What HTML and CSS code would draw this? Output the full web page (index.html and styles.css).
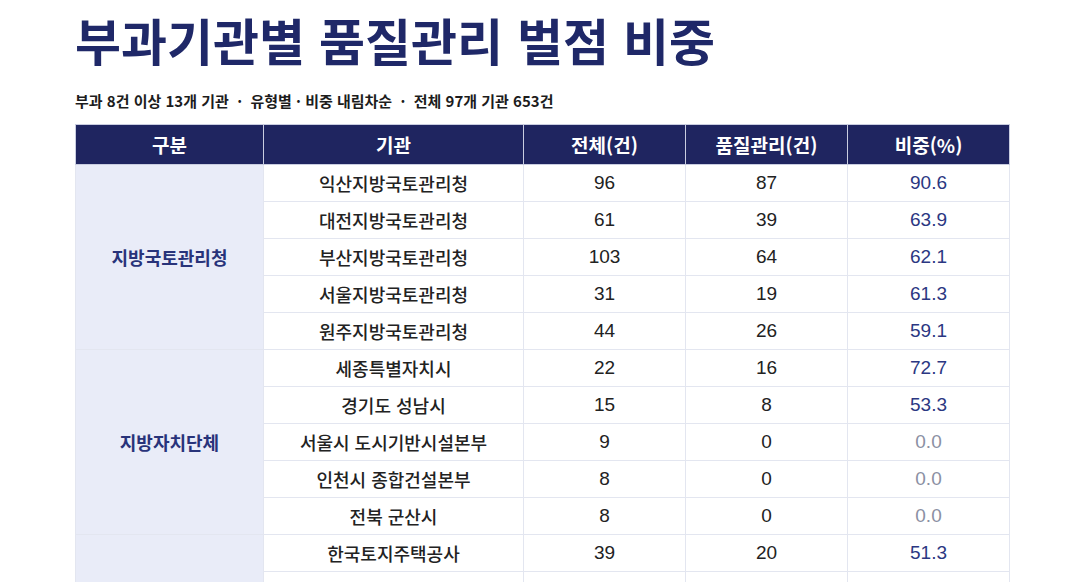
FILE: index.html
```html
<!DOCTYPE html>
<html lang="ko">
<head>
<meta charset="utf-8">
<title>부과기관별 품질관리 벌점 비중</title>
<link rel="stylesheet" href="styles.css">
</head>
<body>
<main class="page">
  <h1 class="title">부과기관별 품질관리 벌점 비중</h1>
  <p class="subtitle">부과 8건 이상 13개 기관 &nbsp;·&nbsp; 유형별 · 비중 내림차순 &nbsp;·&nbsp; 전체 97개 기관 653건</p>
  <table class="grid">
    <colgroup>
      <col class="c-cat"><col class="c-org"><col class="c-num"><col class="c-num"><col class="c-num">
    </colgroup>
    <thead>
      <tr><th>구분</th><th>기관</th><th>전체(건)</th><th>품질관리(건)</th><th>비중(%)</th></tr>
    </thead>
    <tbody>
      <tr><td class="cat" rowspan="5">지방국토관리청</td><td class="org">익산지방국토관리청</td><td>96</td><td>87</td><td class="pct">90.6</td></tr>
      <tr><td class="org">대전지방국토관리청</td><td>61</td><td>39</td><td class="pct">63.9</td></tr>
      <tr><td class="org">부산지방국토관리청</td><td>103</td><td>64</td><td class="pct">62.1</td></tr>
      <tr><td class="org">서울지방국토관리청</td><td>31</td><td>19</td><td class="pct">61.3</td></tr>
      <tr><td class="org">원주지방국토관리청</td><td>44</td><td>26</td><td class="pct">59.1</td></tr>
      <tr><td class="cat" rowspan="5">지방자치단체</td><td class="org">세종특별자치시</td><td>22</td><td>16</td><td class="pct">72.7</td></tr>
      <tr><td class="org">경기도 성남시</td><td>15</td><td>8</td><td class="pct">53.3</td></tr>
      <tr><td class="org">서울시 도시기반시설본부</td><td>9</td><td>0</td><td class="pct zero">0.0</td></tr>
      <tr><td class="org">인천시 종합건설본부</td><td>8</td><td>0</td><td class="pct zero">0.0</td></tr>
      <tr><td class="org">전북 군산시</td><td>8</td><td>0</td><td class="pct zero">0.0</td></tr>
      <tr><td class="cat" rowspan="3">공공기관</td><td class="org">한국토지주택공사</td><td>39</td><td>20</td><td class="pct">51.3</td></tr>
      <tr><td class="org">한국도로공사</td><td>8</td><td>3</td><td class="pct">37.5</td></tr>
      <tr><td class="org">한국수자원공사</td><td>10</td><td>3</td><td class="pct">30.0</td></tr>
    </tbody>
  </table>
</main>
</body>
</html>
```

FILE: styles.css
```css
html, body {
  margin: 0;
  padding: 0;
  background: #ffffff;
}

.page {
  padding: 9px 0 0 75px;
  font-family: "Liberation Sans", "Noto Sans CJK KR", sans-serif;
  color: #222222;
}

.title {
  margin: 0;
  font-family: "Noto Sans CJK KR", sans-serif;
  font-size: 50px;
  font-weight: 700;
  line-height: 60px;
  color: #1f2868;
}

.subtitle {
  margin: 21px 0 0 0;
  font-family: "Noto Sans CJK KR", sans-serif;
  font-size: 15px;
  font-weight: 700;
  line-height: 22px;
  color: #1c1c1c;
}

.grid {
  margin-top: 12px;
  border-collapse: collapse;
  table-layout: fixed;
  width: 935px;
}

.c-cat { width: 188px; }
.c-org { width: 260px; }
.c-num { width: 162px; }

.grid th {
  height: 39px;
  padding: 0;
  background: #1f2560;
  color: #ffffff;
  font-family: "Noto Sans CJK KR", sans-serif;
  font-size: 19px;
  font-weight: 700;
  text-align: center;
  border: 1px solid #c9cde0;
}

.grid td {
  height: 36px;
  padding: 0;
  text-align: center;
  font-size: 19px;
  color: #222222;
  border: 1px solid #e3e6f0;
  background: #ffffff;
}

.grid td.org {
  font-family: "Noto Sans CJK KR", sans-serif;
  font-size: 18px;
  font-weight: 500;
}

.grid td.cat {
  background: #e9ecf8;
  color: #28337a;
  font-family: "Noto Sans CJK KR", sans-serif;
  font-size: 18px;
  font-weight: 700;
}

.grid td.pct {
  color: #2b3782;
}

.grid td.pct.zero {
  color: #8b90a3;
}
```
